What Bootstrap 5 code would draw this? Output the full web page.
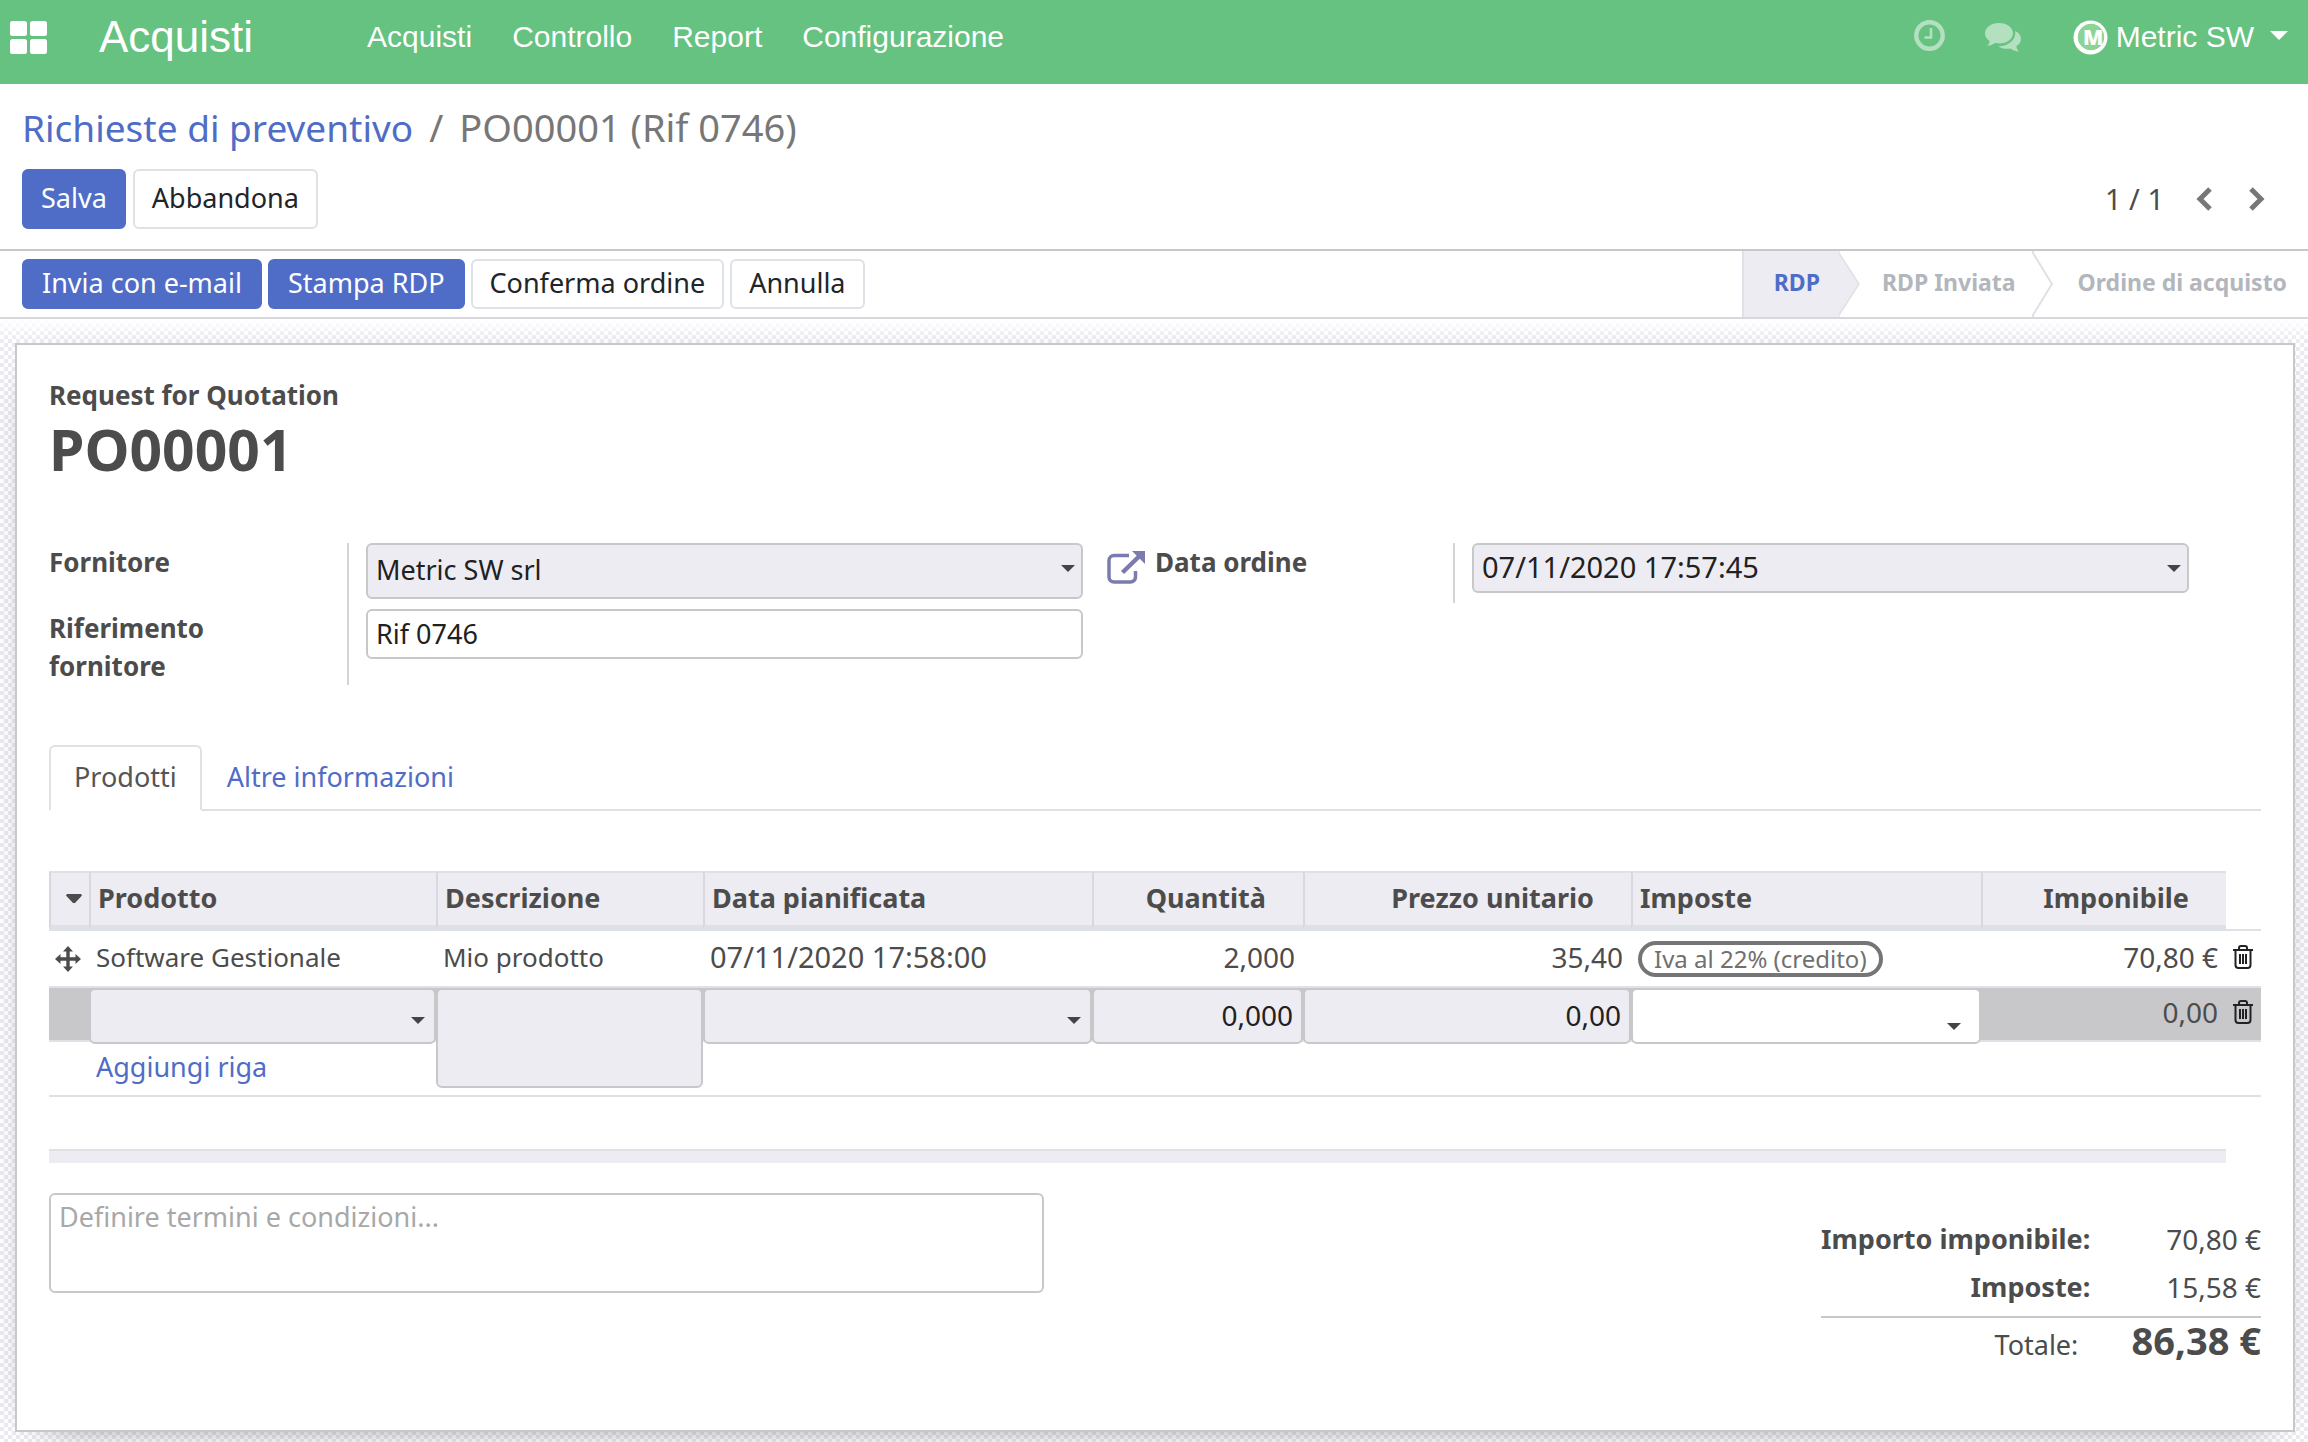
<!DOCTYPE html>
<html lang="it">
<head>
<meta charset="utf-8">
<meta name="viewport" content="width=device-width, initial-scale=1">
<title>PO00001 (Rif 0746) - Acquisti</title>
<link href="https://cdn.jsdelivr.net/npm/bootstrap@5.3.0/dist/css/bootstrap.min.css" rel="stylesheet">
<style>
:root{--ink:#4c4c4c;--blue:#4f6dc7;--lilac:#edecf2;--line:#c8c8ca;--soft:#dee2e6}
body{font-family:"Noto Sans",sans-serif;font-size:27px;line-height:38px;color:var(--ink);background:#fff}
a{color:var(--blue);text-decoration:none}
svg{display:block;flex:none}
/* top bar */
.topbar{background:#66c280;height:84px;padding:0 20px 10px 10px;font-family:"Liberation Sans",sans-serif;font-size:30px}
.topbar a,.topbar button{color:#fff}
.topbar .brand-name{font-size:44px;margin:0 94px 0 52px}
.topbar .nav-link{padding:0 20px}
.plain-btn{background:none;border:0;padding:0;color:inherit}
/* control panel */
.panel{padding:15px 42px 20px 22px;border-bottom:2px solid var(--line)}
.crumbs{font-size:38px;line-height:56px;color:#777;margin-bottom:13px}
.crumbs a{font-size:37px}
.crumbs .breadcrumb-item+.breadcrumb-item{padding-left:16px}
.crumbs .breadcrumb-item+.breadcrumb-item::before{padding-right:16px;color:#777}
.btn{font-size:27px;line-height:38px;border-width:2px;border-radius:6px;padding:3px 17px 5px;height:50px}
.btn-tall{height:60px}
.btn-main{background:var(--blue);border-color:var(--blue);color:#fff}
.btn-plain{background:#fff;border-color:var(--soft);color:#212529}
.btn-row{gap:7px}
.statusbar .btn-row{gap:6px}
.statusbar .btn-main{padding-left:18px;padding-right:18px}
/* status bar */
.statusbar{padding-left:22px;height:68px;border-bottom:2px solid #d8d8dc}
.steps{font-size:23px;font-weight:700;color:#b3b6bc}
.step{padding:0 16px 4px 22px}
.step-on{background:var(--lilac);border-left:2px solid var(--soft);color:var(--blue);padding:0 19px 4px 30px}
.step-last{padding:0 21px 4px 25px}
/* sheet */
.desk{padding:24px 13px 10px 15px;background:linear-gradient(#fff,#fff0 20px),repeating-conic-gradient(#edebf2 0 25%,#fff 0 50%) 0 0/8px 8px}
.sheet{background:#fff;border:2px solid var(--line);padding:31px 32px 40px 32px;box-shadow:0 10px 40px -30px #000}
.sheet h1{font-size:57px;line-height:60px;font-weight:700;margin:5px 0 64px}
.kicker,.lbl{font-weight:700;font-size:26px}
.group{display:grid;grid-template-columns:298px 1fr}
.fieldcell{border-left:2px solid #d4d4d8;padding:0 10px 10px 17px;display:flex;gap:24px;align-items:flex-start}
.fieldcell.wide{padding-right:72px}
.fld{width:100%;min-width:0;height:50px;border:2px solid var(--line);border-radius:6px;padding:0 8px 2px;font-size:27px;line-height:38px;color:#212121;background-color:#fff;appearance:none;display:block;resize:none}
.fld-req{background-color:var(--lilac)}
.fld-num{text-align:right}
.fld-num,.num{font-size:28px}
.when{font-size:29px}
select.fld{background-image:url("data:image/svg+xml,%3Csvg xmlns='http://www.w3.org/2000/svg' viewBox='0 0 14 7'%3E%3Cpath d='M0 0h14L7 7z' fill='%23444'/%3E%3C/svg%3E");background-repeat:no-repeat;background-position:right 6px center;background-size:14px 7px}
select.fld.tall{height:56px;background-position:right 6px top 20px}
.nav-tabs{margin-top:60px;border-bottom:2px solid var(--soft)}
.nav-tabs .nav-link{border-width:2px;border-radius:6px 6px 0 0;margin-bottom:-2px;padding:12px 23px 14px;line-height:36px;height:66px;color:var(--blue)}
.nav-tabs .nav-link.active{color:#555;border-color:var(--soft) var(--soft) #fff}
/* order lines */
.lines{width:100%;table-layout:fixed;border-collapse:separate;border-spacing:0;margin-top:60px}
.lines th{background:var(--lilac);height:60px;padding:0 7px 2px;border:solid var(--soft);border-width:2px 0 6px 2px;border-left-color:#d8d8de}
.lines th.amount{padding-right:37px;text-align:right}
.lines th.bare{background:none;border-width:0 0 2px}
.lines td{height:57px;padding:0 8px 3px 7px;border-bottom:2px solid var(--soft);white-space:nowrap}
.lines td.wordy{font-size:26px}
.lines .editing td{height:54px;background:var(--line);position:relative;padding-bottom:4px}
.lines .addrow td{height:55px;padding-bottom:3px}
.lines .cell-fld{position:absolute;left:0;top:0;height:56px;z-index:1}
.lines textarea.cell-fld{height:100px}
.lines select.cell-fld{background-position:right 9px top 27px}
.lines select.cell-fld.low{background-position:right 18px top 33px}
.lines td.glyph{padding:0 0 0 6px;color:#222}
.taxpill{border:4px solid #757575;border-radius:18px;font-size:24px;line-height:28px;padding:0 12px;color:#707070;display:inline-block;vertical-align:middle}
.w-caret{width:40px}.w-desc{width:267px}.w-date{width:389px}.w-qty{width:211px}.w-price{width:328px}.w-tax{width:350px}.w-sub{width:245px}.w-del{width:35px}
.footband{height:14px;margin:52px 35px 30px 0;background:var(--lilac);border-top:2px solid var(--soft)}
.terms{width:45%;height:100px;padding:3px 8px}
.terms::placeholder{color:#a8a8a8;opacity:1}
.totals{width:440px;margin-top:22px;text-align:right}
.totals th,.totals td{height:48px;padding:0;white-space:nowrap}
.totals td.num{width:172px}
.totals th{padding-right:4px}
.totals .grand>*{border-top:2px solid var(--line);height:48px;vertical-align:baseline;line-height:44px}
.totals .grand th{font-weight:400;padding-right:16px}
.totals .grand td{font-size:38px;font-weight:700}
.totals .spacer td{height:6px}
</style>
</head>
<body class="min-vh-100 d-flex flex-column">
<nav class="topbar d-flex align-items-center">
  <a href="#" aria-label="Applicazioni"><svg width="37" height="33" viewBox="0 0 37 33" fill="#fff"><rect width="17" height="15" rx="2.500"/><rect x="20" width="17" height="15" rx="2.500"/><rect y="18" width="17" height="15" rx="2.500"/><rect x="20" y="18" width="17" height="15" rx="2.500"/></svg></a>
  <a href="#" class="brand-name">Acquisti</a>
  <div class="nav me-auto">
    <a class="nav-link" href="#">Acquisti</a><a class="nav-link" href="#">Controllo</a><a class="nav-link" href="#">Report</a><a class="nav-link" href="#">Configurazione</a>
  </div>
  <button class="plain-btn me-4" aria-label="Attività"><svg class="mb-1" width="31" height="31" viewBox="0 0 31 31" fill="none" stroke="#b3e1c0"><circle cx="15.500" cy="15.500" r="13.200" stroke-width="4.400"/><path d="M17 8v9.500h-6.500" stroke-width="2.600"/></svg></button>
  <button class="plain-btn ms-3 me-5" aria-label="Messaggi"><svg class="me-1" width="36" height="29" viewBox="0 0 36 29" fill="#b3e1c0"><path d="M14 0c8 0 14 4.600 14 10.200s-6 10.200-14 10.200c-1.400 0-2.700-.1-4-.4-2 1.500-4.600 2.600-7.500 2.900 1.200-1.500 2-3 2.300-4.600C1.900 16.500 0 13.500 0 10.200 0 4.600 6 0 14 0z"/><path d="M30.300 8C33.700 9.800 36 12.600 36 15.800c0 3-1.800 5.700-4.700 7.500.3 1.700 1.200 3.600 2.500 5.300-3.200-.2-6.200-1.400-8.300-3.100-5 .8-9.300-.2-12.300-2.300C23 23.500 31 17.500 30.300 8z"/></svg></button>
  <button class="plain-btn d-flex align-items-center"><svg class="me-2" width="35" height="35" viewBox="0 0 35 35"><circle cx="17.500" cy="17.500" r="17" fill="#fff"/><circle cx="18" cy="17" r="13.200" fill="#8bd494"/><text x="10" y="25" font-family="Open Sans" font-size="21" font-weight="800" fill="#fff">M</text></svg>Metric SW<svg class="ms-3 mb-1" width="18" height="9" viewBox="0 0 18 9"><path d="M0 0h18L9 9z" fill="#fff"/></svg></button>
</nav>

<header class="panel">
  <ol class="breadcrumb crumbs">
    <li class="breadcrumb-item"><a href="#">Richieste di preventivo</a></li>
    <li class="breadcrumb-item">PO00001 (Rif 0746)</li>
  </ol>
  <div class="d-flex align-items-center btn-row">
    <button class="btn btn-main btn-tall">Salva</button>
    <button class="btn btn-plain btn-tall me-auto">Abbandona</button>
    <span class="me-4 when">1 / 1</span>
    <button class="plain-btn me-4" aria-label="Precedente"><svg width="18" height="24" viewBox="0 0 18 24" fill="none" stroke="#777" stroke-width="5"><path d="M15 2 5 12l10 10"/></svg></button>
    <button class="plain-btn ms-1" aria-label="Successivo"><svg width="18" height="24" viewBox="0 0 18 24" fill="none" stroke="#777" stroke-width="5"><path d="m3 2 10 10L3 22"/></svg></button>
  </div>
</header>

<div class="statusbar d-flex align-items-center">
  <div class="d-flex btn-row me-auto">
    <button class="btn btn-main">Invia con e-mail</button>
    <button class="btn btn-main">Stampa RDP</button>
    <button class="btn btn-plain">Conferma ordine</button>
    <button class="btn btn-plain">Annulla</button>
  </div>
  <div class="steps d-flex align-items-stretch h-100">
    <span class="step step-on d-flex align-items-center">RDP</span>
    <svg width="21" height="66" viewBox="0 0 21 66"><path d="M0 0v2l20 31L0 64v2z" fill="#edecf2"/><path d="M0 0v2l20 31L0 64v2" fill="none" stroke="#dee2e6" stroke-width="1.500"/></svg>
    <span class="step d-flex align-items-center">RDP Inviata</span>
    <svg width="21" height="66" viewBox="0 0 21 66"><path d="M1 0v2l19 31L1 64v2" fill="none" stroke="#dee2e6" stroke-width="2"/></svg>
    <span class="step step-last d-flex align-items-center">Ordine di acquisto</span>
  </div>
</div>

<main class="desk flex-grow-1 d-flex flex-column">
 <div class="sheet flex-grow-1">
  <div class="kicker">Request for Quotation</div>
  <h1>PO00001</h1>
  <div class="row g-0">
    <div class="col-6"><div class="group">
      <label class="lbl" for="partner">Fornitore</label>
      <div class="fieldcell"><select id="partner" class="fld fld-req tall"><option>Metric SW srl</option></select>
        <button class="plain-btn pt-2" aria-label="Apri fornitore"><svg width="38" height="33" viewBox="0 0 38 33"><path d="M22 4.500H7a5 5 0 0 0-5 5V26a5 5 0 0 0 5 5h16.500a5 5 0 0 0 5-5v-6" fill="none" stroke="#7c7bad" stroke-width="3.500"/><path d="M15.500 21.500 33 4.500" stroke="#7c7bad" stroke-width="4.500"/><path d="M25 0h13v13z" fill="#7c7bad"/></svg></button></div>
      <label class="lbl" for="ref">Riferimento<br>fornitore</label>
      <div class="fieldcell wide"><input id="ref" class="fld" value="Rif 0746"></div>
    </div></div>
    <div class="col-6"><div class="group">
      <label class="lbl" for="odate">Data ordine</label>
      <div class="fieldcell wide"><select id="odate" class="fld fld-req when"><option>07/11/2020 17:57:45</option></select></div>
    </div></div>
  </div>

  <ul class="nav nav-tabs">
    <li class="nav-item"><a class="nav-link active" href="#">Prodotti</a></li>
    <li class="nav-item"><a class="nav-link" href="#">Altre informazioni</a></li>
  </ul>

  <table class="lines">
    <colgroup><col class="w-caret"><col><col class="w-desc"><col class="w-date"><col class="w-qty"><col class="w-price"><col class="w-tax"><col class="w-sub"><col class="w-del"></colgroup>
    <thead><tr>
      <th><svg class="ms-2" width="16" height="9" viewBox="0 0 16 9"><path d="M1 0h14l1 1.500L9 9H7L0 1.500z" fill="#4c4c4c"/></svg></th>
      <th>Prodotto</th><th>Descrizione</th><th>Data pianificata</th><th class="amount">Quantità</th><th class="amount">Prezzo unitario</th><th>Imposte</th><th class="amount">Imponibile</th><th class="bare"></th>
    </tr></thead>
    <tbody>
      <tr>
        <td class="glyph"><svg width="26" height="26" viewBox="0 0 26 26" fill="#4c4c4c"><path d="M13 0l5 5.500h-3.300v5.800h5.800V8L26 13l-5.500 5v-3.300h-5.800v5.800H18L13 26l-5-5.500h3.300v-5.800H5.500V18L0 13l5.500-5v3.300h5.800V5.500H8z"/></svg></td>
        <td class="wordy">Software Gestionale</td><td class="wordy">Mio prodotto</td><td class="when">07/11/2020 17:58:00</td><td class="text-end num">2,000</td><td class="text-end num">35,40</td><td><span class="taxpill">Iva al 22% (credito)</span></td><td class="text-end num">70,80 €</td>
        <td class="glyph"><button class="plain-btn" aria-label="Elimina riga"><svg width="22" height="24" viewBox="0 0 22 24" fill="none" stroke="#222" stroke-width="2"><path d="M1 5h20M7 5V3q0-2 2-2h4q2 0 2 2v2M3.500 5v15q0 3 3 3h9q3 0 3-3V5M8 9v10M11 9v10M14 9v10"/></svg></button></td>
      </tr>
      <tr class="editing">
        <td></td>
        <td><select class="fld fld-req cell-fld" aria-label="Prodotto"><option></option></select></td>
        <td><textarea class="fld fld-req cell-fld" aria-label="Descrizione"></textarea></td>
        <td><select class="fld fld-req cell-fld" aria-label="Data pianificata"><option></option></select></td>
        <td><input class="fld fld-req fld-num cell-fld" aria-label="Quantità" value="0,000"></td>
        <td><input class="fld fld-req fld-num cell-fld" aria-label="Prezzo unitario" value="0,00"></td>
        <td><select class="fld cell-fld low" aria-label="Imposte"><option></option></select></td>
        <td class="text-end num">0,00</td>
        <td class="glyph"><button class="plain-btn" aria-label="Elimina riga"><svg width="22" height="24" viewBox="0 0 22 24" fill="none" stroke="#222" stroke-width="2"><path d="M1 5h20M7 5V3q0-2 2-2h4q2 0 2 2v2M3.500 5v15q0 3 3 3h9q3 0 3-3V5M8 9v10M11 9v10M14 9v10"/></svg></button></td>
      </tr>
      <tr class="addrow"><td></td><td colspan="8"><a href="#">Aggiungi riga</a></td></tr>
    </tbody>
  </table>
  <div class="footband"></div>

  <div class="d-flex justify-content-between align-items-start">
    <textarea class="fld terms" aria-label="Termini e condizioni" placeholder="Definire termini e condizioni..."></textarea>
    <table class="totals">
      <tr><th>Importo imponibile:</th><td class="num">70,80 €</td></tr>
      <tr><th>Imposte:</th><td class="num">15,58 €</td></tr>
      <tr class="spacer"><td colspan="2"></td></tr>
      <tr class="grand"><th>Totale:</th><td>86,38 €</td></tr>
    </table>
  </div>
 </div>
</main>
<script src="https://cdn.jsdelivr.net/npm/bootstrap@5.3.0/dist/js/bootstrap.bundle.min.js"></script>
</body>
</html>
